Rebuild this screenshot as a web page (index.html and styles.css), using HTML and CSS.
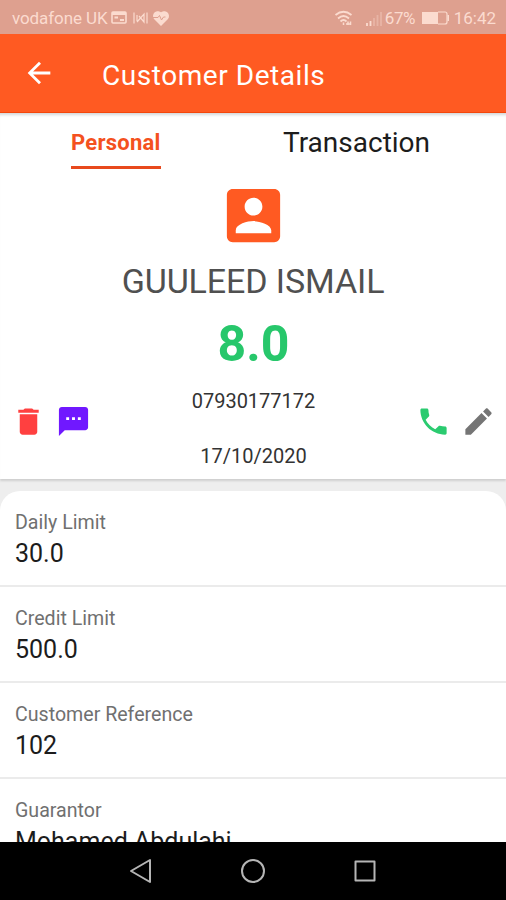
FILE: index.html
```html
<!DOCTYPE html>
<html lang="en">
<head>
  <meta charset="UTF-8" />
  <meta name="viewport" content="width=device-width, initial-scale=1.0"/>
  <title>Customer Details</title>
  <link rel="stylesheet" href="styles.css">
</head>
<body>
  <div class="status-bar">
    <span class="carrier">vodafone UK</span>
    <svg class="status-left" width="64" height="18" viewBox="0 0 64 18" fill="none" stroke="currentColor">
      <rect x="3" y="3" width="14" height="11" rx="1" stroke-width="1.600"/>
      <path d="M3 4.500h14" stroke-width="3"/>
      <path d="M11 11h4M5.500 8.500h3.500" stroke-width="2"/>
      <path d="M25 3.500v11M28 6v6M38 3.500v11M35 6v6M28 13l7-8v8l-5-6" stroke-width="1.200"/>
      <path d="M52 16l-6.200-6.300a4.100 4.100 0 0 1 6.200-5.400 4.100 4.100 0 0 1 6.200 5.400z" fill="currentColor" stroke-width="1.500"/>
      <path class="pulse" d="M44 8.500h5l1.500-2 2 4.500 2-3h2"/>
    </svg>
    <svg class="wifi" width="20" height="18" viewBox="0 0 20 18" fill="none" stroke="currentColor" stroke-width="1.800">
      <path d="M1.500 6q8-6.500 16 0M4 9.500q5.500-5 11 0M6.500 12.500q3-3 6 0"/>
      <path d="M9.500 13.500v2.500M12 15h5M14 12.500v3.500M16.500 12.500v3.500" stroke-width="1.500"/>
    </svg>
    <svg class="signal" width="18" height="17" viewBox="0 0 18 17" stroke="currentColor" stroke-width="1.800">
      <path d="M2 16v-3M5.500 16v-5"/>
      <path d="M9 16v-8M12.500 16v-11M16 16v-14" opacity=".35"/>
    </svg>
    <span class="percent">67%</span>
    <svg class="battery" width="29" height="16" viewBox="0 0 29 16">
      <path d="M17 2h7q2 0 2 2v8q0 2-2 2h-7" fill="none" stroke="currentColor" stroke-width="1.200"/>
      <path d="M1 2h16v12H1zM26.500 5h1.500v6h-1.500z" fill="currentColor"/>
    </svg>
    <span class="clock">16:42</span>
  </div>

  <header class="app-bar">
    <svg width="34" height="34" viewBox="0 0 24 24" fill="currentColor"><path d="M20 11H7.830l5.590-5.590L12 4l-8 8 8 8 1.410-1.410L7.830 13H20v-2z"/></svg>
    <h1>Customer Details</h1>
  </header>

  <section class="profile">
    <nav class="tabs">
      <a class="tab active">Personal</a>
      <a class="tab">Transaction</a>
    </nav>
    <svg class="avatar" width="71" height="71" viewBox="0 0 24 24" fill="currentColor"><path d="M3 5v14c0 1.100.89 2 2 2h14c1.100 0 2-.9 2-2V5c0-1.100-.9-2-2-2H5c-1.110 0-2 .9-2 2zm12 4c0 1.660-1.340 3-3 3s-3-1.340-3-3 1.340-3 3-3 3 1.340 3 3zm-9 8c0-2 4-3.100 6-3.100s6 1.100 6 3.100v1H6v-1z"/></svg>
    <h2 class="name">GUULEED ISMAIL</h2>
    <div class="balance">8.0</div>
    <div class="contact">
      <div class="actions">
        <svg class="delete" width="35" height="35" viewBox="0 0 24 24" fill="currentColor"><path d="M6 19c0 1.100.9 2 2 2h8c1.100 0 2-.9 2-2V7H6v12zM19 4h-3.500l-1-1h-5l-1 1H5v2h14V4z"/></svg>
        <svg class="message" width="35" height="35" viewBox="0 0 24 24" fill="currentColor"><path d="M20 2H4c-1.100 0-1.990.9-1.990 2L2 22l4-4h14c1.100 0 2-.9 2-2V4c0-1.100-.9-2-2-2zM9 11H7V9h2v2zm4 0h-2V9h2v2zm4 0h-2V9h2v2z"/></svg>
      </div>
      <div class="info">
        <div>07930177172</div>
        <div>17/10/2020</div>
      </div>
      <div class="actions">
        <svg class="call" width="35" height="35" viewBox="0 0 24 24" fill="currentColor"><path d="M6.620 10.790c1.440 2.830 3.760 5.140 6.590 6.590l2.200-2.200c.27-.27.67-.36 1.020-.24 1.120.37 2.330.57 3.570.57.55 0 1 .45 1 1V20c0 .55-.45 1-1 1-9.390 0-17-7.610-17-17 0-.55.45-1 1-1h3.500c.55 0 1 .45 1 1 0 1.250.2 2.450.57 3.570.11.35.03.74-.25 1.020l-2.200 2.200z"/></svg>
        <svg class="edit" width="35" height="35" viewBox="0 0 24 24" fill="currentColor"><path d="M3 17.250V21h3.750L17.810 9.940l-3.750-3.750L3 17.250zM20.710 7.040c.39-.39.39-1.020 0-1.410l-2.340-2.340c-.39-.39-1.020-.39-1.410 0l-1.830 1.830 3.750 3.750 1.830-1.830z"/></svg>
      </div>
    </div>
  </section>

  <main class="details">
    <div class="row">
      <div class="label">Daily Limit</div>
      <div class="value">30.0</div>
    </div>
    <div class="row">
      <div class="label">Credit Limit</div>
      <div class="value">500.0</div>
    </div>
    <div class="row">
      <div class="label">Customer Reference</div>
      <div class="value">102</div>
    </div>
    <div class="row">
      <div class="label">Guarantor</div>
      <div class="value">Mohamed Abdulahi</div>
    </div>
  </main>

  <footer class="nav-bar">
    <svg width="26" height="28" viewBox="0 0 26 28"><path d="M22 3v22L3 14z"/></svg>
    <svg width="26" height="28" viewBox="0 0 26 28"><circle cx="13" cy="14" r="11"/></svg>
    <svg width="26" height="28" viewBox="0 0 26 28"><rect x="3.500" y="4.500" width="19" height="19"/></svg>
  </footer>
</body>
</html>
```
FILE: styles.css
```css
* {
  box-sizing: border-box;
}
body {
  margin: 0;
  height: 900px;
  font-family: Roboto, "Liberation Sans", sans-serif;
  background: #eeeeee;
  color: #1c1c1c;
  display: flex;
  flex-direction: column;
  overflow: hidden;
}
svg {
  display: block;
  flex: none;
}
.status-bar {
  height: 34px;
  flex: none;
  background: #dea08f;
  color: #fbdbcf;
  display: flex;
  align-items: center;
  padding: 2px 10px 0 12px;
  font-size: 17px;
}
.carrier {
  width: 97px;
  white-space: nowrap;
  letter-spacing: -0.1px;
}
.wifi {
  margin-left: 161px;
}
.signal {
  margin-left: 11px;
}
.percent {
  width: 36px;
  margin-left: 2px;
  letter-spacing: -0.4px;
}
.battery {
  margin-right: 4px;
}
.pulse {
  stroke: #dea08f;
}
.app-bar {
  height: 79px;
  flex: none;
  background: #ff5a22;
  color: #fff;
  display: flex;
  align-items: center;
  gap: 46px;
  padding: 0 22px;
  border-bottom: 1px solid #f4470b;
}
.app-bar h1 {
  margin: 4px 0 0;
  font-size: 28px;
  font-weight: 400;
  letter-spacing: 0.55px;
}
.profile {
  height: 366px;
  flex: none;
  background: #fff;
  display: flex;
  flex-direction: column;
  align-items: center;
  box-shadow: inset 0 4px 3px -2px #d5d8da, 0 2px 2px #cfcfcf;
}
.tabs {
  width: 100%;
  height: 67px;
  display: flex;
  align-items: flex-start;
  padding: 10px 0 0 71px;
}
.tab {
  font-size: 28px;
  line-height: 40px;
}
.tab.active {
  width: 90px;
  height: 46px;
  margin-right: 122px;
  border-bottom: 3px solid #e8491d;
  color: #f4511e;
  font-size: 22px;
  line-height: 39px;
  font-weight: 700;
  letter-spacing: 0.25px;
}
.avatar {
  color: #ff5a22;
}
.name {
  margin: 10px 0 0;
  font-size: 34px;
  line-height: 40px;
  font-weight: 400;
  letter-spacing: -0.1px;
  color: #505050;
}
.balance {
  margin-top: 13px;
  padding-left: 1px;
  font-size: 50px;
  line-height: 60px;
  font-weight: 700;
  color: #27c76b;
}
.contact {
  width: 100%;
  display: flex;
  align-items: flex-start;
  justify-content: space-between;
  padding: 15px 10px 0 11px;
}
.actions {
  display: flex;
  gap: 10px;
  padding-top: 15px;
}
.info {
  display: flex;
  flex-direction: column;
  gap: 31px;
  text-align: center;
  font-size: 20px;
  line-height: 24px;
  color: #333;
}
.delete {
  color: #ff4040;
}
.message {
  color: #7018ff;
}
.call {
  color: #2bcb70;
}
.edit {
  color: #757575;
}
.details {
  flex: 1;
  min-height: 0;
  margin-top: 12px;
  overflow: hidden;
  background: #fff;
  border-radius: 20px 20px 0 0;
}
.row {
  height: 96px;
  padding: 20px 15px 0;
  border-bottom: 2px solid #ebebeb;
}
.label {
  font-size: 19.6px;
  line-height: 24px;
  color: #707070;
}
.value {
  margin-top: 3px;
  font-size: 25px;
  line-height: 32px;
}
.nav-bar {
  height: 58px;
  flex: none;
  background: #000;
  display: flex;
  align-items: center;
  justify-content: center;
  gap: 86px;
}
.nav-bar svg {
  fill: none;
  stroke: #b5b5b5;
  stroke-width: 2;
  stroke-linejoin: round;
}
```
